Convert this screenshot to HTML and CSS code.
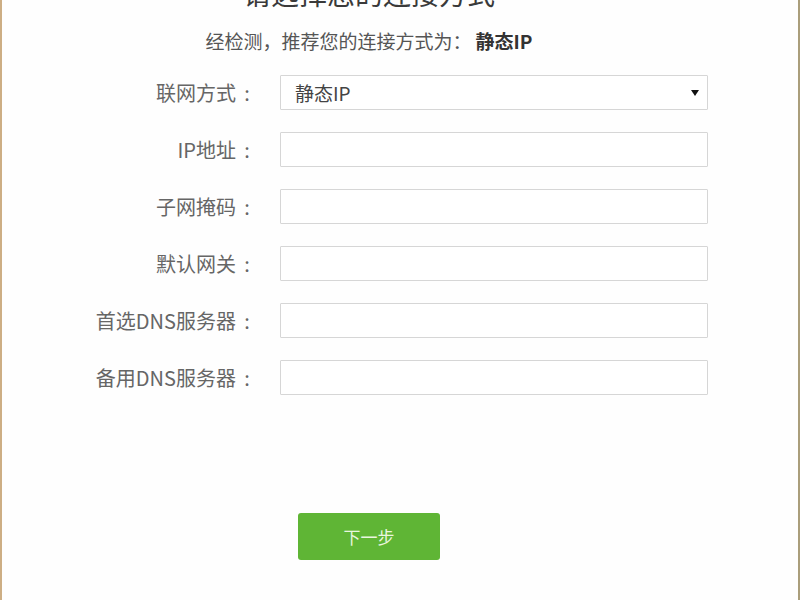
FILE: index.html
```html
<!DOCTYPE html>
<html lang="zh-CN">
<head>
  <meta charset="UTF-8" />
  <meta name="viewport" content="width=device-width, initial-scale=1.0"/>
  <title>上网设置</title>
  <link rel="stylesheet" href="styles.css">
</head>
<body>
  <div class="page">
    <div class="wrap">
      <h1 class="title">请选择您的连接方式</h1>
      <p class="hint">经检测，推荐您的连接方式为：<b>静态IP</b></p>

      <form class="form" onsubmit="return false">
        <label for="wanType">联网方式<span class="colon">:</span></label>
        <div class="select-box">
          <select id="wanType">
            <option>静态IP</option>
            <option>自动获得IP地址</option>
            <option>宽带拨号上网</option>
          </select>
          <span class="arrow"></span>
        </div>

        <label for="ipAddr">IP地址<span class="colon">:</span></label>
        <input type="text" id="ipAddr">

        <label for="mask">子网掩码<span class="colon">:</span></label>
        <input type="text" id="mask">

        <label for="gateway">默认网关<span class="colon">:</span></label>
        <input type="text" id="gateway">

        <label for="dns1">首选DNS服务器<span class="colon">:</span></label>
        <input type="text" id="dns1">

        <label for="dns2">备用DNS服务器<span class="colon">:</span></label>
        <input type="text" id="dns2">
      </form>

      <div class="actions">
        <button class="btn" type="button">下一步</button>
      </div>
    </div>
  </div>
</body>
</html>
```

FILE: styles.css
```css
html, body {
  margin: 0;
  background: #fff;
}
body {
  font-family: "Noto Sans CJK SC", "Noto Sans", sans-serif;
  color: #333;
}
.page {
  width: 800px;
  height: 600px;
  box-sizing: border-box;
  border-left: 2px solid #cdae84;
  border-right: 2px solid #aa9e7b;
  overflow: hidden;
  background: #fefefe;
}
.wrap {
  display: flex;
  flex-direction: column;
  padding-right: 62px;
}
.title {
  margin: -25px 0 0;
  font-size: 28px;
  line-height: 36px;
  font-weight: normal;
  text-align: center;
  color: #3a3a3a;
}
.hint {
  margin: 16px 0 0;
  font-size: 19px;
  line-height: 28px;
  text-align: center;
  color: #555;
}
.hint b {
  margin-left: 4px;
  color: #333;
}
.form {
  display: grid;
  grid-template-columns: 256px 428px;
  grid-auto-rows: 35px;
  column-gap: 22px;
  row-gap: 22px;
  margin-top: 20px;
  align-items: center;
}
.form label {
  text-align: right;
  font-size: 20px;
  color: #666;
}
.colon {
  display: inline-block;
  width: 22px;
  text-align: center;
}
.form input,
.form select {
  box-sizing: border-box;
  width: 100%;
  height: 35px;
  border: 1px solid #d6d6d6;
  border-radius: 1px;
  background: #fff;
  font-family: inherit;
  font-size: 19px;
  color: #444;
  outline: none;
}
.form input {
  padding: 0 12px;
}
.select-box {
  position: relative;
  height: 35px;
}
.form select {
  appearance: none;
  -webkit-appearance: none;
  padding: 0 14px;
}
.arrow {
  position: absolute;
  right: 9px;
  top: 15px;
  width: 0;
  height: 0;
  border-left: 4px solid transparent;
  border-right: 4px solid transparent;
  border-top: 6px solid #111;
  pointer-events: none;
}
.actions {
  display: flex;
  justify-content: center;
  margin-top: 118px;
}
.btn {
  width: 142px;
  height: 47px;
  border: none;
  border-radius: 3px;
  background: #5fb535;
  color: #e9f6df;
  font-family: inherit;
  font-size: 17px;
  cursor: pointer;
}
.btn:hover {
  background: #56a82f;
}
```
